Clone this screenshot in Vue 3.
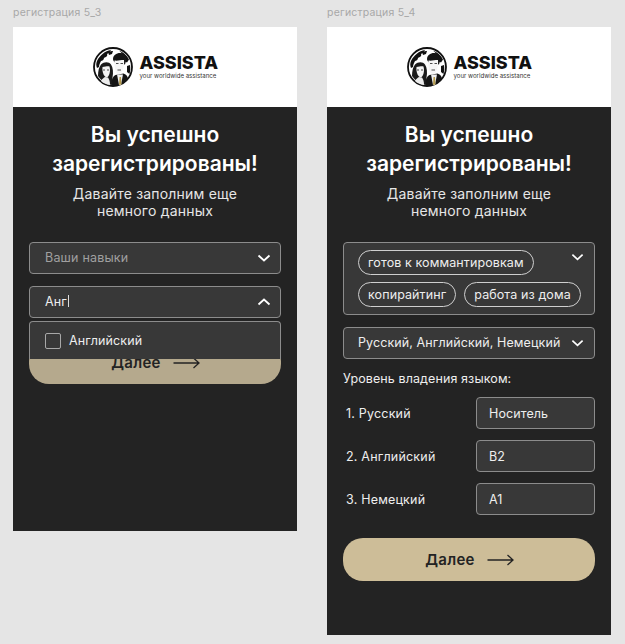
<script setup>
const skills = [
  ['готов к коммантировкам'],
  ['копирайтинг', 'работа из дома'],
]

const levels = [
  { name: '1. Русский', value: 'Носитель' },
  { name: '2. Английский', value: 'B2' },
  { name: '3. Немецкий', value: 'A1' },
]

const screens = ['регистрация 5_3', 'регистрация 5_4']
</script>

<template>
  <div class="page">
    <div v-for="(title, i) in screens" :key="title" class="screen">
      <div class="screen-label">{{ title }}</div>
      <div class="frame" :class="i === 0 ? 'frame-short' : 'frame-tall'">
        <header class="top">
          <svg class="logo-mark" width="40" height="40" viewBox="0 0 40 40">
            <circle cx="20" cy="20" r="19" fill="#fff" stroke="#111" stroke-width="1.800" />
            <!-- globe -->
            <path d="M4 14C7 8 12 4 18 3c-1 2-2 3-4 4 1 2-1 3-3 4 0 2-2 3-3 3-1 2-2 4-2 6l-2 1c-1-2-1-5 0-7z" fill="#111" />
            <path d="M15 5c2-1 4-1 5-1l-1 3-3 1z" fill="#111" />
            <path d="M26 3.500c4 1.500 8 4.500 10 9l-2 3-2-1c0-4-2-8-6-11z" fill="#111" />
            <path d="M34 19l3-1c.5 3 .3 6-.5 9l-2.500-2z" fill="#111" />
            <!-- woman -->
            <path d="M5 29c0-5 1-9 3-11.500 3-3 8-3 10 0 2 3 2.500 8 1.500 13l.5 7.500c-6 0-11-3.500-15-9z" fill="#1b1b1b" />
            <path d="M9.500 20c2.500 0 5-1 7-.500 1 3 .5 7-1 9.500-1 1.500-2.500 1.500-3.500.500-2-2-3-6-2.500-9.500z" fill="#f4f4f4" />
            <path d="M10 23h2M14 23h2" stroke="#222" stroke-width=".8" />
            <path d="M8 34c1-2 3-3.500 4-4l3 .5c1 1.500 2 3.500 2 7.500-4-.500-7-2-9-4z" fill="#ececec" />
            <!-- man -->
            <path d="M18.500 38.500c0-5 .5-8.500 4-10.500l8-1.500c3 1 4.500 3 4.500 6-4 4-10 6.500-16.500 6z" fill="#141414" />
            <path d="M24 27.500h6l-2 10.500h-2z" fill="#f0f0f0" />
            <path d="M26.500 30l1.500 0 .5 7.500-2.500.5z" fill="#b49a4c" />
            <path d="M20 12c0-4 4-6.500 8-6 4 .5 6 3.500 5 8l-1 3.500-10-2c-1-1-2-2-2-3.500z" fill="#151515" />
            <path d="M21.500 13.500c3 .5 6-.5 9.500-.500.5 4.500-.5 9-2.500 12.500-1.500 2-3 2-4.500 1-2-2-3-8.500-2.500-13z" fill="#f6f6f6" />
            <path d="M23 16.500h2.500M27.500 16.500h2.500M24.500 23h3.500" stroke="#222" stroke-width=".8" fill="none" />
          </svg>
          <div class="logo-text">
            <div class="logo-name">ASSISTA</div>
            <div class="logo-tag">your worldwide assistance</div>
          </div>
        </header>

        <main class="body">
          <h1 class="heading">Вы успешно<br />зарегистрированы!</h1>
          <p class="lead">Давайте заполним еще<br />немного данных</p>

          <div v-if="i === 0" class="form">
            <div class="field first">
              <span class="placeholder">Ваши навыки</span>
              <svg class="chevron" width="14" height="8" viewBox="0 0 14 8"><path d="M1.500 1.500L7 6.500l5.500-5" /></svg>
            </div>
            <div class="lang-wrap">
              <div class="field">
                <span>Анг<i class="caret"></i></span>
                <svg class="chevron" width="14" height="8" viewBox="0 0 14 8"><path d="M1.500 6.500L7 1.500l5.500 5" /></svg>
              </div>
              <div class="dropdown">
                <span class="checkbox"></span>
                <span>Английский</span>
              </div>
            </div>
            <button class="next dim">
              Далее
              <svg width="27" height="12" viewBox="0 0 27 12"><path d="M0.500 6H26M20.500 1l5.500 5-5.500 5" /></svg>
            </button>
          </div>

          <div v-else class="form">
            <div class="tag-box first">
              <div class="tag-rows">
                <div v-for="(row, r) in skills" :key="r" class="tag-row">
                  <span v-for="tag in row" :key="tag" class="tag">{{ tag }}</span>
                </div>
              </div>
              <svg class="chevron tag-chevron" width="13" height="8" viewBox="0 0 14 8"><path d="M1.500 1.500L7 6.500l5.500-5" /></svg>
            </div>
            <div class="field langs">
              <span>Русский, Английский, Немецкий</span>
              <svg class="chevron" width="13" height="8" viewBox="0 0 14 8"><path d="M1.500 1.500L7 6.500l5.500-5" /></svg>
            </div>
            <div class="levels-title">Уровень владения языком:</div>
            <div v-for="item in levels" :key="item.name" class="level-row">
              <span class="level-name">{{ item.name }}</span>
              <div class="level-input">{{ item.value }}</div>
            </div>
            <button class="next after-levels">
              Далее
              <svg width="27" height="12" viewBox="0 0 27 12"><path d="M0.500 6H26M20.500 1l5.500 5-5.500 5" /></svg>
            </button>
          </div>
        </main>
      </div>
    </div>
  </div>
</template>

<style>
html,
body {
  margin: 0;
  background: #e5e5e5;
}
</style>

<style scoped>
.page {
  width: 625px;
  height: 644px;
  overflow: hidden;
  box-sizing: border-box;
  display: flex;
  gap: 30px;
  padding-left: 13px;
  background: #e5e5e5;
  font-family: Inter, "Liberation Sans", sans-serif;
}

.screen {
  width: 284px;
}

.screen-label {
  height: 27px;
  padding-top: 6px;
  box-sizing: border-box;
  font-size: 10.500px;
  line-height: 14px;
  letter-spacing: 0.2px;
  color: #a8a8a8;
}

.frame {
  background: #232323;
}

.frame-short {
  height: 504px;
}

.frame-tall {
  height: 608px;
}

.top {
  height: 80px;
  background: #fff;
  display: flex;
  align-items: center;
  justify-content: center;
  gap: 7px;
}

.logo-mark {
  flex: none;
}

.logo-text {
  width: 78px;
  color: #111;
}

.logo-name {
  font-size: 18px;
  line-height: 15px;
  font-weight: 800;
  white-space: nowrap;
}

.logo-tag {
  margin-top: 2px;
  font-size: 6.100px;
  line-height: 8px;
  color: #333;
  white-space: nowrap;
}

.body {
  padding: 0 16px;
  color: #fff;
}

.heading {
  margin: 0;
  padding-top: 13px;
  text-align: center;
  font-size: 21px;
  line-height: 29px;
  font-weight: 600;
}

.lead {
  margin: 7px 0 0;
  text-align: center;
  font-size: 14px;
  line-height: 17px;
  color: #e6e6e6;
  letter-spacing: 0.2px;
}

.form {
  font-size: 12.500px;
  letter-spacing: 0.1px;
  color: #eee;
}

.first {
  margin-top: 23px;
}

.field,
.tag-box,
.dropdown,
.level-input {
  box-sizing: border-box;
  background: #383838;
  border: 1px solid #8c8c8c;
  border-radius: 4px;
}

.field {
  height: 32px;
  display: flex;
  align-items: center;
  justify-content: space-between;
  padding: 0 9px 1px 15px;
}

.placeholder {
  color: #a0a0a0;
  letter-spacing: 0.2px;
}

.chevron {
  flex: none;
}

.chevron path {
  fill: none;
  stroke: #fff;
  stroke-width: 1.800;
}

.caret {
  display: inline-block;
  width: 1px;
  height: 12px;
  margin-left: 1px;
  background: #ddd;
  vertical-align: -1px;
}

.lang-wrap {
  position: relative;
  margin-top: 12px;
}

.dropdown {
  position: absolute;
  z-index: 1;
  left: 0;
  right: 0;
  top: 35px;
  height: 38px;
  display: flex;
  align-items: center;
  gap: 8px;
  padding-left: 15px;
  border-bottom: none;
  border-radius: 4px 4px 0 0;
}

.checkbox {
  width: 14px;
  height: 14px;
  border: 1px solid #a8a8a8;
  border-radius: 2px;
}

.next {
  width: 100%;
  height: 43px;
  margin-top: 23px;
  border: none;
  border-radius: 20px;
  display: flex;
  align-items: center;
  justify-content: center;
  gap: 12px;
  padding-left: 7px;
  background: #cdbd98;
  color: #232323;
  font-family: inherit;
  font-size: 15px;
  font-weight: 600;
  letter-spacing: 0.3px;
}

.next svg path {
  fill: none;
  stroke: #232323;
  stroke-width: 1.300;
}

.dim {
  background: #b5a98d;
}

.tag-box {
  position: relative;
  height: 73px;
  padding: 7px 14px 0;
}

.tag-chevron {
  position: absolute;
  top: 10px;
  right: 10px;
}

.tag-rows {
  display: flex;
  flex-direction: column;
  gap: 7px;
}

.tag-row {
  display: flex;
  gap: 8px;
}

.tag {
  box-sizing: border-box;
  height: 25px;
  padding: 0 9px 1px;
  display: flex;
  align-items: center;
  border: 1px solid #cfcfcf;
  border-radius: 13px;
  white-space: nowrap;
}

.langs {
  margin-top: 12px;
  padding: 0 10px 1px 14px;
}

.levels-title {
  margin-top: 12px;
  line-height: 15px;
}

.level-row {
  height: 32px;
  margin-top: 11px;
  display: flex;
  align-items: center;
  justify-content: space-between;
  padding-left: 3px;
}

.level-name {
  letter-spacing: 0.2px;
}

.level-input {
  width: 119px;
  height: 32px;
  display: flex;
  align-items: center;
  padding-left: 12px;
}

.after-levels {
  margin-top: 23px;
}
</style>
